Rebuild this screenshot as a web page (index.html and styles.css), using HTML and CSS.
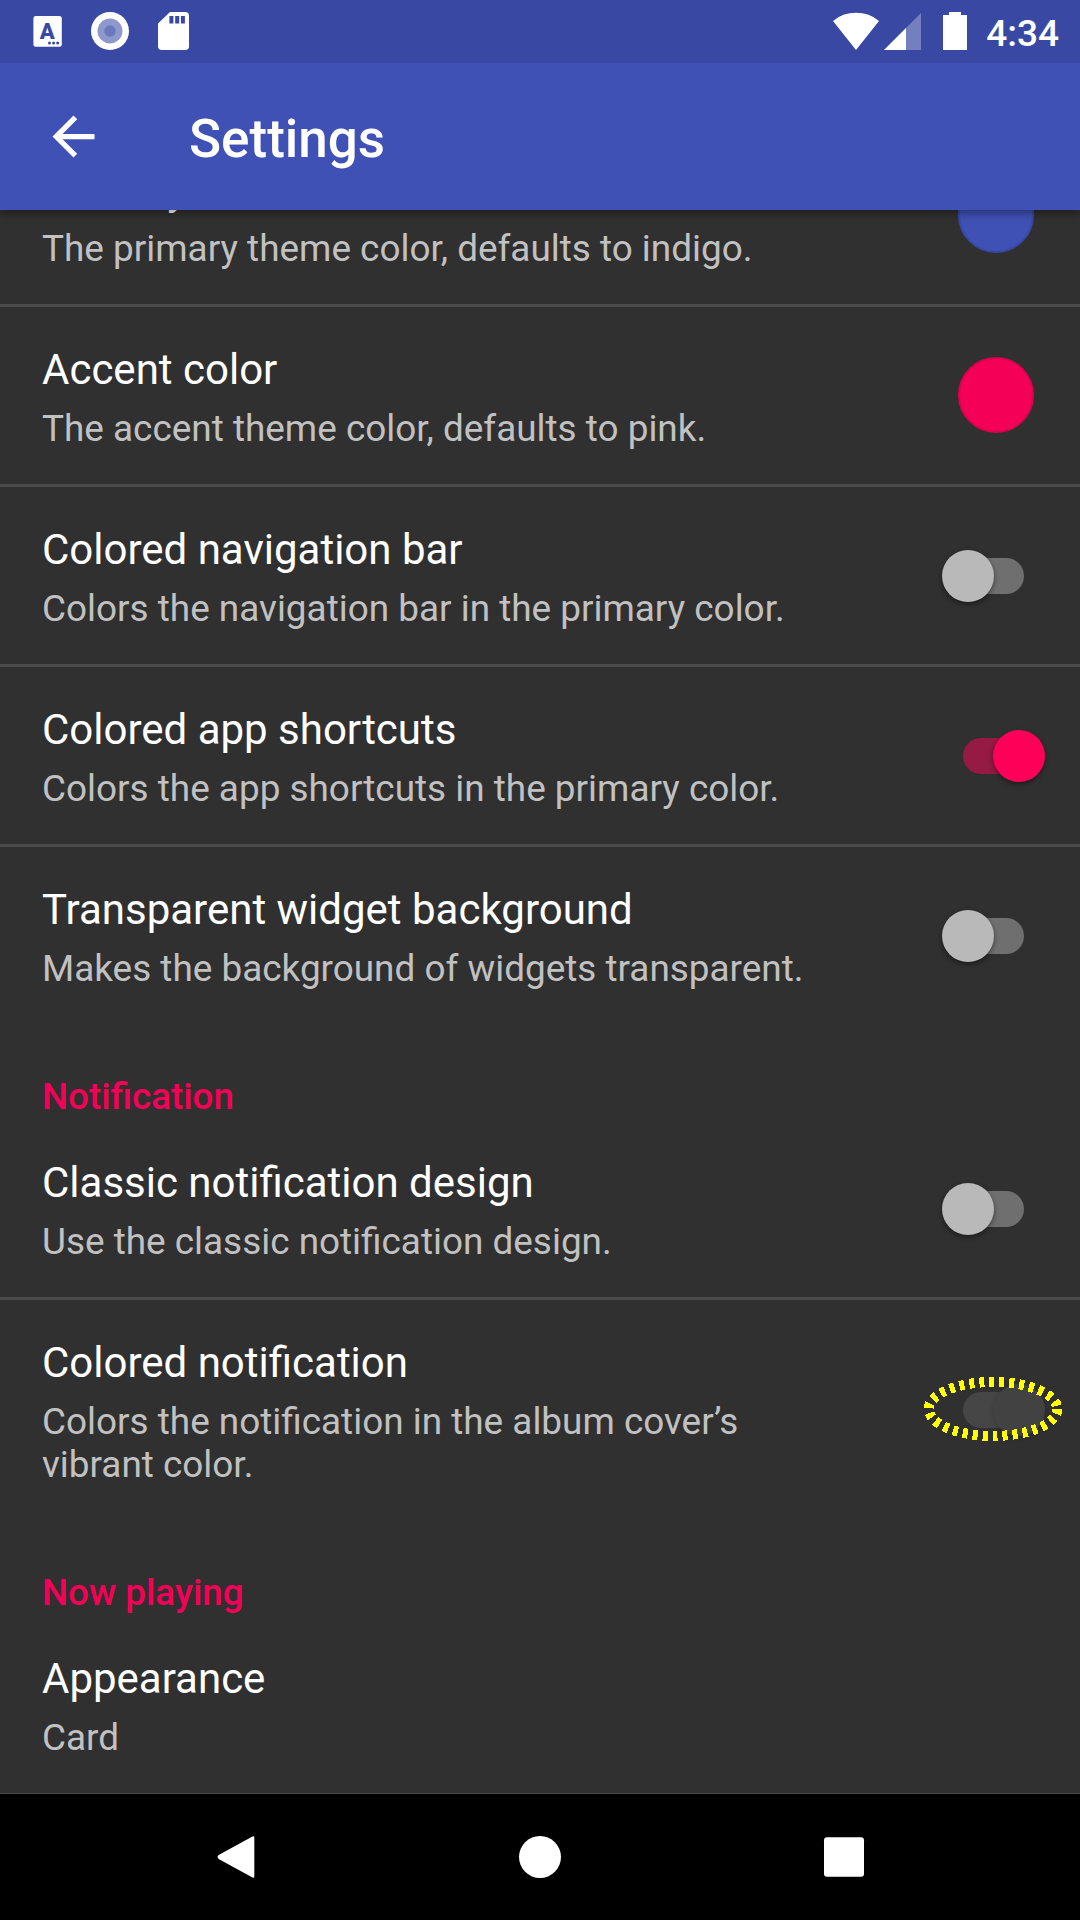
FILE: index.html
```html
<!DOCTYPE html>
<html lang="en">
<head>
<meta charset="utf-8">
<title>Settings</title>
<link rel="stylesheet" href="styles.css">
</head>
<body>
<div class="screen">
  <header class="status-bar">
    <div class="status-left">
      <svg class="ic-keyboard" width="30" height="38" viewBox="0 0 30 38">
        <rect x=".4" y="4" width="28.4" height="30.8" rx="2.5" fill="#fff"/>
        <text class="keyboard-letter" x="14.3" y="26.5" text-anchor="middle">A</text>
        <g fill="#3949a3"><circle cx="16.5" cy="31" r="1.5"/><circle cx="20.6" cy="31" r="1.5"/><circle cx="24.7" cy="31" r="1.5"/></g>
      </svg>
      <svg class="ic-record" width="38" height="38" viewBox="0 0 38 38">
        <circle cx="19" cy="19" r="19" fill="#fff"/>
        <circle cx="19" cy="19" r="12.5" fill="#8e98cd"/>
        <circle cx="19" cy="19" r="5.7" fill="#6b78bd"/>
      </svg>
      <svg class="ic-sd" width="31" height="38" viewBox="0 0 31 38">
        <path d="M12 0H27.2Q31 0 31 3.8V34.2Q31 38 27.2 38H3.8Q0 38 0 34.2V11.5Z" fill="#fff"/>
        <path d="M11.4 4h4v7.5h-4zM17.2 4h4v7.5h-4zM22.9 4h4v7.5h-4z" fill="#3949a3"/>
      </svg>
    </div>
    <div class="status-right">
      <svg class="ic-wifi" width="46" height="38" viewBox="0 0 46 38">
        <path d="M0 9Q9.500 .8 23 .8T46 9L23 38Z" fill="#fff"/>
      </svg>
      <svg class="ic-signal" width="37" height="38" viewBox="0 0 37 38">
        <path d="M37 1V38H0Z" fill="#fff" fill-opacity=".3"/>
        <path d="M22 16V38H0Z" fill="#fff"/>
      </svg>
      <svg class="ic-battery" width="24" height="38" viewBox="0 0 24 38">
        <path d="M6 0h12v3h6v35H0V3h6z" fill="#fff"/>
      </svg>
      <span class="clock">4:34</span>
    </div>
  </header>

  <div class="toolbar">
    <svg class="ic-back" width="63" height="63" viewBox="0 0 24 24">
      <path d="M20 11H7.830l5.590-5.590L12 4l-8 8 8 8 1.410-1.410L7.830 13H20v-2z" fill="#fff"/>
    </svg>
    <h1 class="toolbar-title">Settings</h1>
  </div>

  <main class="list">
    <div class="row row-scrolled">
      <div class="text"><div class="title">Primary color</div><div class="summary">The primary theme color, defaults to indigo.</div></div>
      <span class="swatch swatch-primary"></span>
    </div>
    <div class="row">
      <div class="text"><div class="title">Accent color</div><div class="summary">The accent theme color, defaults to pink.</div></div>
      <span class="swatch swatch-accent"></span>
    </div>
    <div class="row">
      <div class="text"><div class="title">Colored navigation bar</div><div class="summary">Colors the navigation bar in the primary color.</div></div>
      <span class="switch off"><span class="thumb"></span></span>
    </div>
    <div class="row">
      <div class="text"><div class="title">Colored app shortcuts</div><div class="summary">Colors the app shortcuts in the primary color.</div></div>
      <span class="switch on"><span class="thumb"></span></span>
    </div>
    <div class="row last">
      <div class="text"><div class="title">Transparent widget background</div><div class="summary">Makes the background of widgets transparent.</div></div>
      <span class="switch off"><span class="thumb"></span></span>
    </div>
    <h2 class="category">Notification</h2>
    <div class="row">
      <div class="text"><div class="title">Classic notification design</div><div class="summary">Use the classic notification design.</div></div>
      <span class="switch off"><span class="thumb"></span></span>
    </div>
    <div class="row last">
      <div class="text"><div class="title">Colored notification</div><div class="summary">Colors the notification in the album cover’s vibrant color.</div></div>
      <span class="switch on disabled"><span class="thumb"></span>
        <svg class="marker" width="142" height="68" viewBox="0 0 142 68">
          <ellipse cx="71" cy="34" rx="64.300" ry="27" fill="none" stroke="#ff0" stroke-width="10" stroke-dasharray="5 5" shape-rendering="crispEdges"/>
        </svg>
      </span>
    </div>
    <h2 class="category">Now playing</h2>
    <div class="row">
      <div class="text"><div class="title">Appearance</div><div class="summary">Card</div></div>
    </div>
  </main>

  <nav class="nav-bar">
    <svg class="nav-icon" width="42" height="42" viewBox="0 0 42 42"><path d="M39.300 1.500V40.500Q39.300 42.400 37.500 41.500L4.500 23.500Q.5 21 4.500 18.500L37.500 .5Q39.300 -.4 39.300 1.500Z" fill="#fff"/></svg>
    <svg class="nav-icon" width="42" height="42" viewBox="0 0 42 42"><circle cx="21" cy="21" r="21" fill="#fff"/></svg>
    <svg class="nav-icon" width="42" height="42" viewBox="0 0 42 42"><rect x="1" y="1.200" width="40" height="39.600" rx="3" fill="#fff"/></svg>
  </nav>
</div>
</body>
</html>
```
FILE: styles.css
```css
* { box-sizing: border-box; }

body {
  margin: 0;
  background: #303030;
  color: #fff;
  font-family: Roboto, "Noto Sans", sans-serif;
}

svg { display: block; flex: none; }

.screen {
  display: flex;
  flex-direction: column;
  width: 1080px;
  height: 1920px;
  overflow: hidden;
}

.status-bar {
  flex: none;
  display: flex;
  justify-content: space-between;
  height: 63px;
  padding: 12px 21px 0 33px;
  background: #3949a3;
  position: relative;
  z-index: 2;
}

.status-left, .status-right { display: flex; align-items: flex-start; }
.ic-record { margin-left: 28px; }
.ic-sd { margin-left: 29px; }
.ic-signal { margin-left: 5px; }
.ic-battery { margin-left: 22px; }

.keyboard-letter {
  font: 900 22px Roboto, sans-serif;
  fill: #3949a3;
}

.clock {
  margin-left: 19px;
  font-size: 37px;
  font-weight: 500;
  line-height: 43px;
}

.toolbar {
  flex: none;
  display: flex;
  align-items: center;
  height: 147px;
  padding-left: 42px;
  background: #3f51b5;
  box-shadow: 0 3px 9px rgba(0, 0, 0, .4);
  position: relative;
  z-index: 1;
}

.toolbar-title {
  margin: 0 0 0 84px;
  padding-top: 4px;
  font-size: 53px;
  font-weight: 500;
  line-height: 62px;
}

.list { flex: 1; min-height: 0; overflow: hidden; }

.row {
  display: flex;
  justify-content: space-between;
  align-items: center;
  padding: 38px 56px 34px 42px;
  border-bottom: 3px solid #4a4a4a;
}

.row-scrolled { margin-top: -83px; }
.row.last { border-bottom: 0; }
.text { width: 800px; }
.title { margin-bottom: 13px; font-size: 42px; line-height: 49px; }
.summary { max-width: 780px; font-size: 36.9px; line-height: 43px; color: #c1c1c1; }

.category {
  height: 96px;
  margin: 0;
  padding: 51px 42px 0;
  font-size: 36.75px;
  font-weight: 500;
  line-height: 43px;
  color: #f50057;
}

.swatch {
  width: 76px;
  height: 76px;
  margin: -8px -10px -2px 0;
  border-radius: 50%;
}

.swatch-primary { background: #3f51b5; border: 2px solid #3949a3; }
.swatch-accent { background: #f50057; border: 2px solid #dd004e; }

.switch {
  position: relative;
  display: flex;
  align-items: center;
  width: 62px;
  height: 36px;
  margin: -4px .5px 0 0;
  border-radius: 18px;
  background: #6f6f6f;
}

.switch.on { justify-content: flex-end; margin-right: -.5px; background: #951a44; }

.thumb {
  flex: none;
  width: 52px;
  height: 52px;
  border-radius: 50%;
  background: #b9b9b9;
  box-shadow: 0 2px 5px rgba(0, 0, 0, .45);
}

.off .thumb { margin-left: -20px; }
.on .thumb { margin-right: -20px; background: #ff0058; }

.switch.disabled { background: #464646; }
.disabled .thumb { background: #424242; box-shadow: 0 2px 5px rgba(0, 0, 0, .2); }

.marker { position: absolute; left: -40.5px; top: -17px; }

.nav-bar {
  flex: none;
  display: flex;
  justify-content: center;
  align-items: center;
  gap: 262px;
  height: 126px;
  background: #000;
}
```
